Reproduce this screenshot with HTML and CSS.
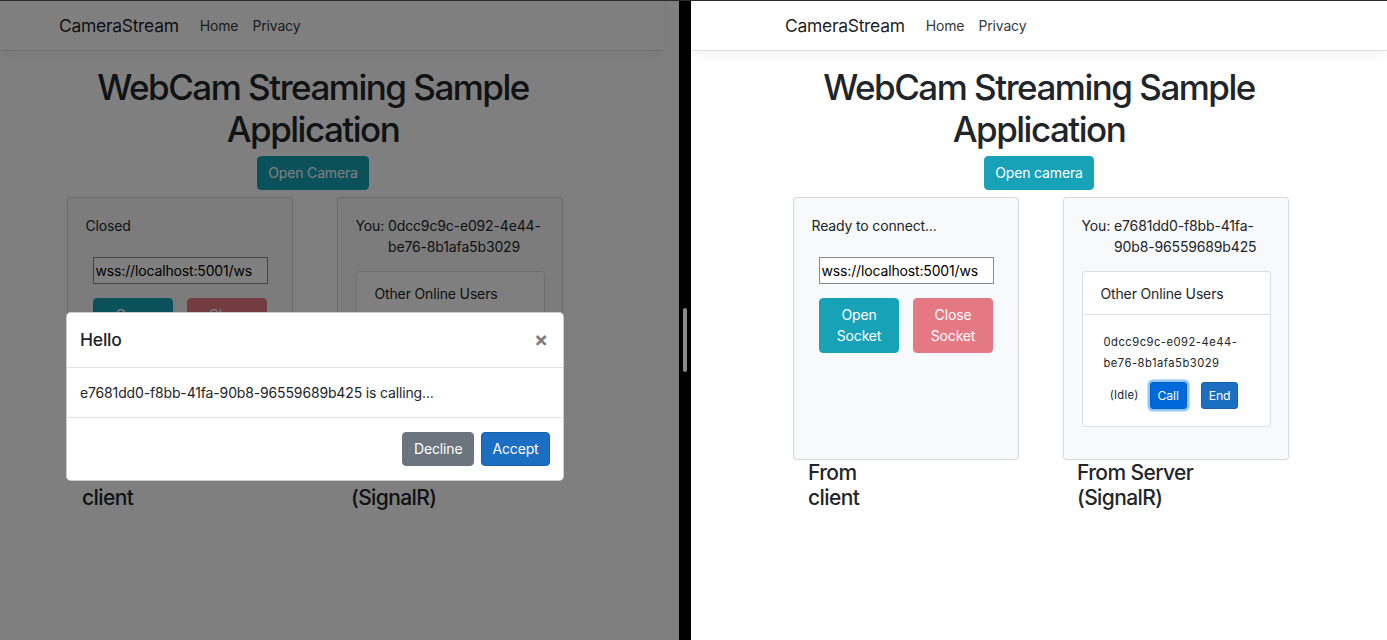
FILE: index.html
```html
<!DOCTYPE html>
<html lang="en">
<head>
<meta charset="utf-8">
<title>CameraStream</title>
<link rel="stylesheet" href="styles.css">
</head>
<body>
<div class="screen">
  <div class="pane pane-left">
    <div class="page page-left">
      <nav class="navbar">
        <div class="nav-inner">
          <span class="brand">CameraStream</span>
          <span class="nav-link">Home</span>
          <span class="nav-link">Privacy</span>
        </div>
      </nav>
      <main class="container">
        <h1 class="title">WebCam Streaming Sample<br>Application</h1>
        <div class="center"><button class="btn btn-info">Open Camera</button></div>
        <div class="cols">
          <div class="col">
            <div class="card">
              <p class="status">Closed</p>
              <input class="url" type="text" value="wss://localhost:5001/ws">
              <div class="socket-btns">
                <button class="btn btn-info btn-tall">Open<br>Socket</button>
                <button class="btn btn-danger btn-tall disabled">Close<br>Socket</button>
              </div>
            </div>
            <h4 class="label">From<br>client</h4>
          </div>
          <div class="col">
            <div class="card">
              <div class="you"><span class="you-label">You:</span><span>0dcc9c9c-e092-4e44-<br>be76-8b1afa5b3029</span></div>
              <div class="inner-card">
                <div class="inner-header">Other Online Users</div>
                <div class="inner-body">
                  <div class="user-id">e7681dd0-f8bb-41fa-<br>90b8-96559689b425</div>
                  <div class="user-row">
                    <span class="user-state">(Idle)</span>
                    <button class="btn btn-sm btn-primary">Call</button>
                    <button class="btn btn-sm btn-primary">End</button>
                  </div>
                </div>
              </div>
            </div>
            <h4 class="label label-server">From Server<br>(SignalR)</h4>
          </div>
        </div>
      </main>
    </div>
    <div class="backdrop"></div>
    <div class="modal">
      <div class="modal-header">
        <h5 class="modal-title">Hello</h5>
        <span class="close">&times;</span>
      </div>
      <div class="modal-body">e7681dd0-f8bb-41fa-90b8-96559689b425 is calling...</div>
      <div class="modal-footer">
        <button class="btn btn-secondary">Decline</button>
        <button class="btn btn-primary">Accept</button>
      </div>
    </div>
  </div>

  <div class="divider"><span class="handle"></span></div>

  <div class="pane pane-right">
    <div class="page page-right">
      <nav class="navbar">
        <div class="nav-inner">
          <span class="brand">CameraStream</span>
          <span class="nav-link">Home</span>
          <span class="nav-link">Privacy</span>
        </div>
      </nav>
      <main class="container">
        <h1 class="title">WebCam Streaming Sample<br>Application</h1>
        <div class="center"><button class="btn btn-info">Open camera</button></div>
        <div class="cols">
          <div class="col">
            <div class="card">
              <p class="status">Ready to connect...</p>
              <input class="url" type="text" value="wss://localhost:5001/ws">
              <div class="socket-btns">
                <button class="btn btn-info btn-tall">Open<br>Socket</button>
                <button class="btn btn-danger btn-tall disabled">Close<br>Socket</button>
              </div>
            </div>
            <h4 class="label">From<br>client</h4>
          </div>
          <div class="col">
            <div class="card">
              <div class="you"><span class="you-label">You:</span><span>e7681dd0-f8bb-41fa-<br>90b8-96559689b425</span></div>
              <div class="inner-card">
                <div class="inner-header">Other Online Users</div>
                <div class="inner-body">
                  <div class="user-id">0dcc9c9c-e092-4e44-<br>be76-8b1afa5b3029</div>
                  <div class="user-row">
                    <span class="user-state">(Idle)</span>
                    <button class="btn btn-sm btn-primary focus">Call</button>
                    <button class="btn btn-sm btn-primary">End</button>
                  </div>
                </div>
              </div>
            </div>
            <h4 class="label label-server">From Server<br>(SignalR)</h4>
          </div>
        </div>
      </main>
    </div>
  </div>
</div>
</body>
</html>
```
FILE: styles.css
```css
* { box-sizing: border-box; }
html, body { margin: 0; padding: 0; }
body {
  font-family: Inter, "Noto Sans", "Liberation Sans", sans-serif;
  font-size: 14px;
  line-height: 21px;
  letter-spacing: -0.15px;
  color: #212529;
  background: #fff;
}
.screen {
  display: flex;
  width: 1387px;
  height: 640px;
  border-top: 1px solid #2b2b2b;
  overflow: hidden;
}
.pane {
  position: relative;
  height: 639px;
  background: #fff;
  overflow: hidden;
}
.pane-left { width: 679px; }
.pane-right { width: 696px; }
.divider {
  width: 12px;
  height: 639px;
  background: #000;
  padding-top: 307px;
}
.handle {
  display: block;
  width: 4px;
  height: 64px;
  margin-left: 4px;
  border-radius: 2px;
  background: #8c8c8c;
}
.page-left { width: 664px; }
.page-right { width: 696px; }

/* navbar */
.navbar {
  height: 50px;
  background: #fff;
  border-bottom: 1px solid #dee2e6;
  box-shadow: 0 4px 10px rgba(0,0,0,.05);
}
.nav-inner {
  width: 540px;
  height: 49px;
  margin: 0 auto;
  padding: 0 15px;
  display: flex;
  align-items: center;
}
.page-left .nav-inner, .page-left .container { margin-left: 43px; }
.brand {
  font-size: 17.5px;
  letter-spacing: -0.3px;
  color: rgba(0,0,0,.9);
  margin-left: 1px;
  margin-right: 14px;
  white-space: nowrap;
}
.nav-link {
  padding: 0 7px;
  color: #343a40;
  font-size: 14px;
}

/* main */
.container {
  width: 540px;
  margin: 0 auto;
  padding: 0 15px;
}
.title {
  margin: 15px 0 6px;
  font-size: 35px;
  line-height: 42px;
  font-weight: 500;
  text-align: center;
  letter-spacing: -1.5px;
  white-space: nowrap;
}
.center { text-align: center; }
.btn {
  display: inline-block;
  font-family: inherit;
  font-size: 14px;
  line-height: 21px;
  letter-spacing: -0.15px;
  padding: 5.25px 10.5px;
  border: 1px solid transparent;
  border-radius: 4px;
  color: #fff;
  cursor: pointer;
}
.btn-info { background: #17a2b8; border-color: #17a2b8; }
.btn-danger { background: #dc3545; border-color: #dc3545; }
.btn-secondary { background: #6c757d; border-color: #6c757d; }
.btn-primary { background: #1b6ec2; border-color: #1861ac; }
.disabled { opacity: .65; }
.btn-sm {
  font-size: 12.25px;
  line-height: 18.4px;
  padding: 3.5px 7px;
  border-radius: 3px;
}
.focus {
  background: #0069d9;
  border-color: #0062cc;
  box-shadow: 0 0 0 2.5px rgba(38,143,255,.5);
}

.cols {
  display: flex;
  gap: 44px;
  padding-left: 9px;
  margin-top: 7px;
}
.col { width: 226px; }
.card {
  height: 263px;
  background: #f8f9fa;
  border: 1px solid rgba(0,0,0,.125);
  border-radius: 4px;
  padding: 17px 17.5px;
}
.status { margin: 0 0 21px; }
.url {
  display: block;
  width: 175px;
  height: 27px;
  margin: 0 auto;
  padding: 1px 2px;
  font-family: inherit;
  font-size: 14px;
  letter-spacing: -0.15px;
  color: #000;
  border: 1px solid #8a8a8a;
  border-radius: 0;
  background: #fff;
}
.socket-btns {
  display: flex;
  justify-content: center;
  gap: 14px;
  margin-top: 14px;
}
.btn-tall { width: 80px; height: 55px; }

.you { display: flex; white-space: nowrap; }
.you-label { margin-right: 4px; }
.inner-card {
  margin-top: 14px;
  background: #fff;
  border: 1px solid rgba(0,0,0,.125);
  border-radius: 4px;
}
.inner-header {
  padding: 11.5px 18px 9.5px;
  border-bottom: 1px solid rgba(0,0,0,.125);
}
.inner-body {
  padding: 17px 18px 17px 21px;
}
.user-id {
  font-size: 11.2px;
  line-height: 21px;
  letter-spacing: 0.5px;
}
.user-row {
  display: flex;
  justify-content: center;
  align-items: center;
  margin-top: 8.5px;
  padding-right: 7px;
}
.user-state {
  font-size: 11.2px;
  margin-right: 11px;
  letter-spacing: 0.3px;
}
.user-row .btn + .btn { margin-left: 14px; }

.label {
  margin: 0;
  padding-left: 15px;
  font-size: 21px;
  line-height: 25px;
  font-weight: 500;
  letter-spacing: -0.6px;
}
.label-server { padding-left: 14px; }

/* modal overlay */
.backdrop {
  position: absolute;
  inset: 0;
  background: rgba(0,0,0,.5);
}
.modal {
  position: absolute;
  left: 66px;
  top: 311px;
  width: 498px;
  background: #fff;
  border: 1px solid rgba(0,0,0,.2);
  border-radius: 4.8px;
}
.modal-header {
  display: flex;
  align-items: flex-start;
  justify-content: space-between;
  padding: 14px 14px 14px 13px;
  border-bottom: 1px solid #dee2e6;
}
.modal-title {
  margin: 0;
  font-size: 17.5px;
  line-height: 26px;
  font-weight: 500;
  letter-spacing: -0.2px;
}
.close {
  font-size: 21px;
  font-weight: 700;
  line-height: 26px;
  color: #000;
  opacity: .5;
  margin-right: 1px;
}
.modal-body { padding: 14px 14px 14px 13px; }
.modal-footer {
  display: flex;
  justify-content: flex-end;
  padding: 10.5px 9.5px 10.5px 10.5px;
  border-top: 1px solid #dee2e6;
}
.modal-footer .btn { margin: 3.5px; }
```
